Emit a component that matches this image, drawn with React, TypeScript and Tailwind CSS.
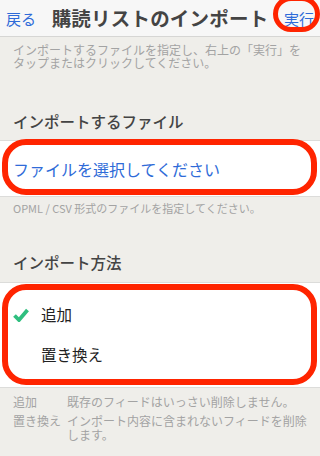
import React from 'react';

const font = { fontFamily: '"Noto Sans CJK JP", "Noto Sans", sans-serif' };

function Check() {
  return (
    <svg width="16" height="14" viewBox="0 0 16 14">
      <path d="M1.5 7.5 L6 12 L14.5 2" fill="none" stroke="#2fbf7f" strokeWidth="3.8" strokeLinejoin="miter" />
    </svg>
  );
}

export default function App() {
  return (
    <div className="w-[320px] h-[456px] overflow-hidden bg-[#efeeea] relative" style={font}>
      {/* HEADER */}
      <div className="relative h-[37px] bg-[#f7f7f7] border-b border-[#d6d6d4] flex items-center justify-between px-[6px]">
        <span className="text-[15px] text-[#2f6bd8] leading-none">戻る</span>
        <span className="text-[19.5px] font-bold text-[#444] leading-none tracking-[0.2px]">購読リストのインポート</span>
        <span className="text-[15px] text-[#2f6bd8] leading-none">実行</span>
        <div className="absolute left-[273px] top-[-4px] w-[47px] h-[36px] border-[5px] border-[#ff2400] rounded-full" />
      </div>

      <div className="px-[13px] pt-[6px] text-[12px] leading-[14px] text-[#a3a3a3]">
        <p>インポートするファイルを指定し、右上の「実行」を</p>
        <p className="-mt-[1px]">タップまたはクリックしてください。</p>
      </div>

      {/* FILE */}
      <h2 className="mt-[41px] px-[13px] text-[15.5px] leading-[20px] font-medium text-[#444]">インポートするファイル</h2>
      <div className="relative mt-[9px] h-[57px] bg-white border-y border-[#dcdcda] flex items-center px-[13px]">
        <span className="text-[16px] text-[#2f6bd8]">ファイルを選択してください</span>
        <div className="absolute left-[2px] right-[3px] top-[-2px] bottom-[1px] border-[6px] border-[#ff2400] rounded-[24px]" />
      </div>
      <p className="mt-[4px] px-[13px] text-[11px] leading-[14px] text-[#a3a3a3]">OPML / CSV 形式のファイルを指定してください。</p>

      {/* METHOD */}
      <h2 className="mt-[37px] px-[13px] text-[15.5px] leading-[20px] font-medium text-[#444]">インポート方法</h2>
      <div className="relative mt-[10px] bg-white border-y border-[#dcdcda] py-[12px]">
        <div className="h-[40px] flex items-center px-[13px]">
          <span className="w-[28px] flex items-center"><Check /></span>
          <span className="text-[15.5px] text-[#222]">追加</span>
        </div>
        <div className="h-[40px] flex items-center px-[13px]">
          <span className="w-[28px]" />
          <span className="text-[15.5px] text-[#222]">置き換え</span>
        </div>
        <div className="absolute left-[2px] right-[3px] top-[1px] bottom-[2px] border-[6px] border-[#ff2400] rounded-[24px]" />
      </div>

      {/* LEGEND */}
      <div className="mt-[7px] px-[13px] text-[12px] leading-[14px] text-[#a3a3a3] flex flex-col gap-[5px]">
        <div className="flex">
          <span className="w-[54px] shrink-0">追加</span>
          <span>既存のフィードはいっさい削除しません。</span>
        </div>
        <div className="flex">
          <span className="w-[54px] shrink-0">置き換え</span>
          <div className="flex flex-col">
            <span>インポート内容に含まれないフィードを削除</span>
            <span>します。</span>
          </div>
        </div>
      </div>
    </div>
  );
}
